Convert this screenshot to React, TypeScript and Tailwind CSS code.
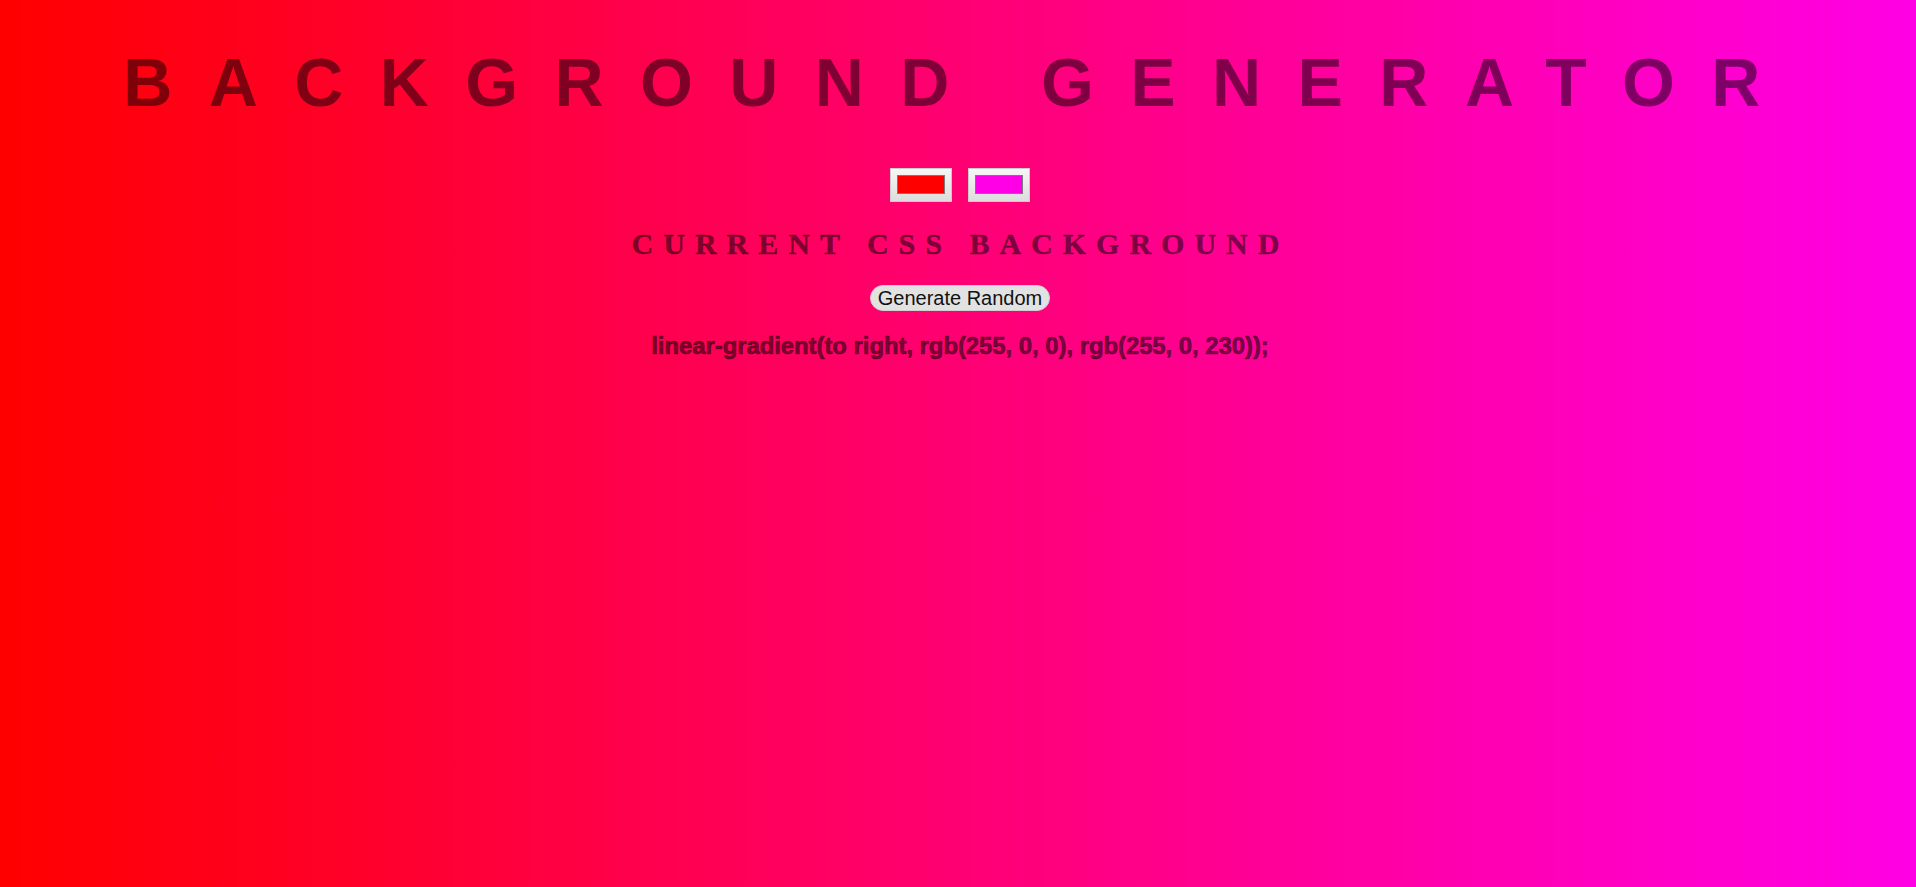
import React from "react";

const ColorBox = ({ color }: { color: string }) => {
    return (
        <div className="w-[62px] h-[34px] border border-[#c9c9c9] bg-[linear-gradient(to_bottom,#f6f6f6,#dddddd)] pt-[6px] px-[6px]">
            <div className="h-[19px] border border-[#7a7a7a]" style={{ backgroundColor: color }} />
        </div>
    );
};

const App = () => {
    const c1 = "#ff0000";
    const c2 = "#ff00e6";

    return (
        <div className="min-h-screen w-full bg-[linear-gradient(to_right,#ff0000,#ff00e6)] font-['Liberation_Sans',Arial,sans-serif] text-black/50 flex flex-col items-center">
            {/* Title */}
            <h1 className="mt-[44px] pl-[4px] text-[68px] leading-[76px] font-bold tracking-[36.4px] uppercase">
                Background Generator
            </h1>

            {/* Pickers */}
            <div className="mt-[48px] flex gap-4 pl-[4px]">
                <ColorBox color={c1} />
                <ColorBox color={c2} />
            </div>

            <h3 className="mt-[25px] pl-[5px] font-['Liberation_Serif',serif] text-[30px] leading-[33px] font-bold tracking-[10px] uppercase [-webkit-text-stroke:0.4px]">
                Current CSS Background
            </h3>

            <div className="mt-[25px] pl-[4px]">
                <button className="h-[26px] px-[7px] rounded-full bg-[#e2e2e2] border border-[#cfcfcf] text-[20px] leading-none text-[#111]">
                    Generate Random
                </button>
            </div>

            <p className="mt-[20px] pl-[4px] text-[23.8px] leading-[27px] font-bold [-webkit-text-stroke:0.7px]">
                linear-gradient(to right, rgb(255, 0, 0), rgb(255, 0, 230));
            </p>
        </div>
    );
};

export default App;
